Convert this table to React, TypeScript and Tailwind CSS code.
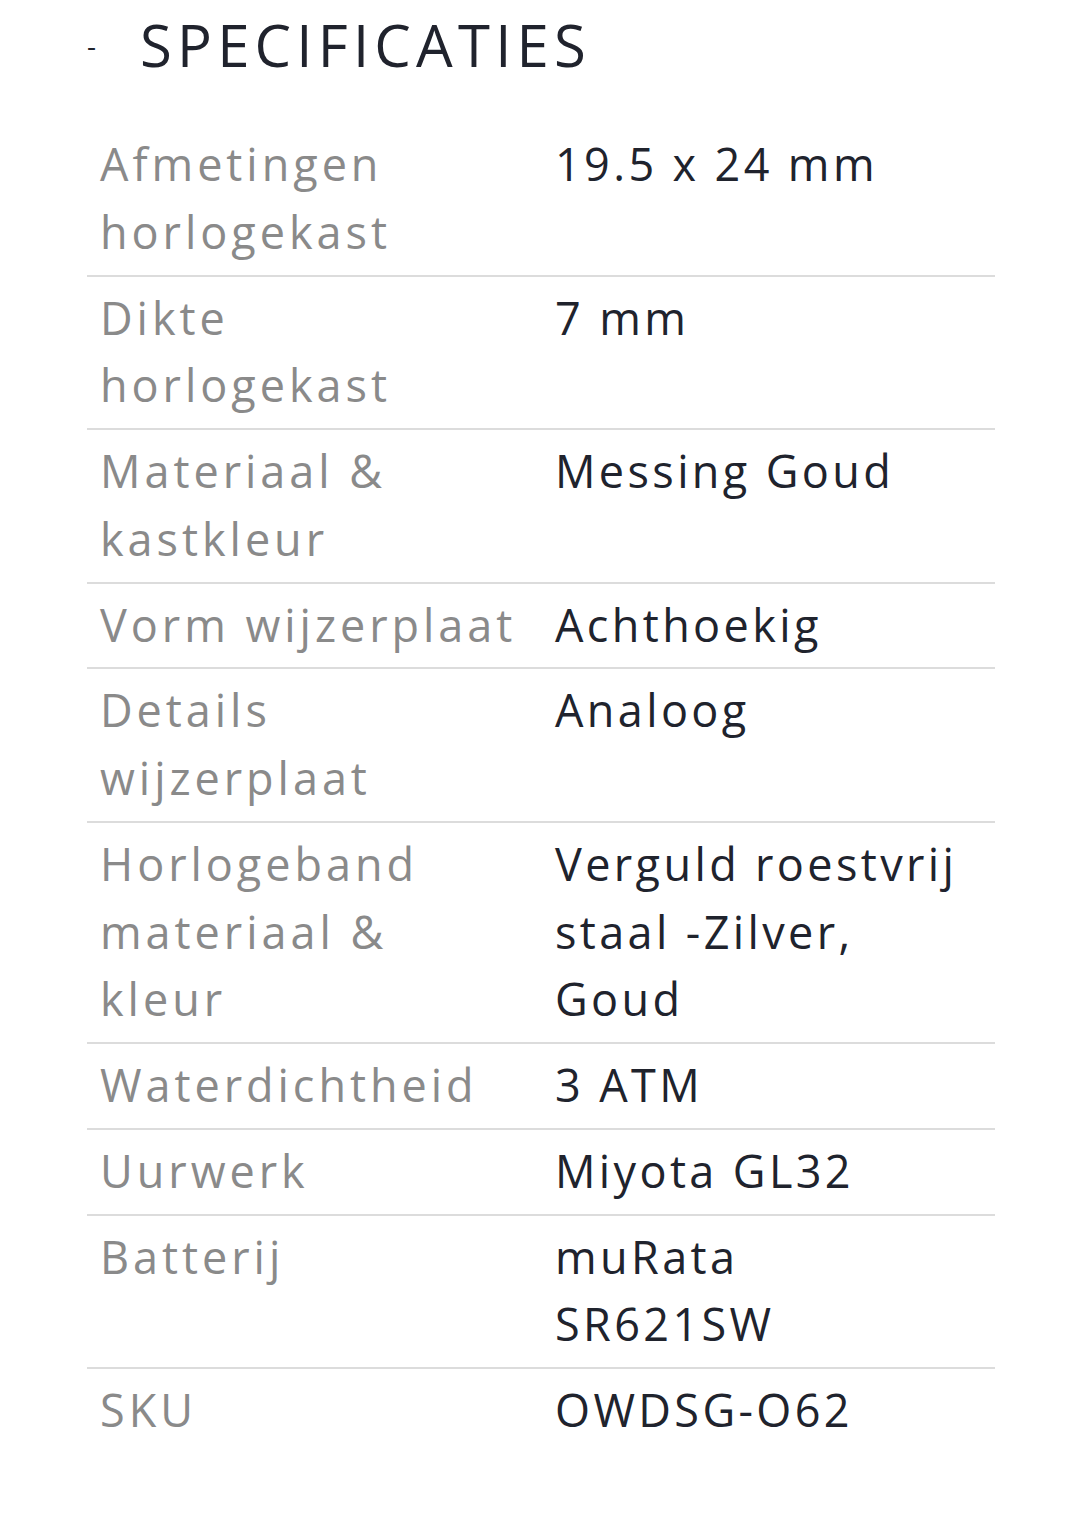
import React from 'react';

const specs: [string[], string[]][] = [
  [['Afmetingen', 'horlogekast'], ['19.5 x 24 mm']],
  [['Dikte', 'horlogekast'], ['7 mm']],
  [['Materiaal &', 'kastkleur'], ['Messing Goud']],
  [['Vorm wijzerplaat'], ['Achthoekig']],
  [['Details', 'wijzerplaat'], ['Analoog']],
  [['Horlogeband', 'materiaal &', 'kleur'], ['Verguld roestvrij', 'staal -Zilver,', 'Goud']],
  [['Waterdichtheid'], ['3 ATM']],
  [['Uurwerk'], ['Miyota GL32']],
  [['Batterij'], ['muRata', 'SR621SW']],
  [['SKU'], ['OWDSG-O62']],
];

const Lines = ({ lines }: { lines: string[] }) => (
  <>
    {lines.map((l) => (
      <span key={l} className="block whitespace-nowrap">
        {l}
      </span>
    ))}
  </>
);

const App = () => {
  return (
    <div className="min-h-[1536px] w-[1080px] bg-white font-['Open_Sans',sans-serif]">
      <div className="flex items-center pt-[10px] pl-[87px]">
        <span className="text-[28px] leading-none text-[#20232d]">-</span>
        <h2 className="ml-[44px] text-[58px] leading-[70px] tracking-[0.09em] text-[#20232d]">
          SPECIFICATIES
        </h2>
      </div>

      <table className="mt-[43px] ml-[87px] w-[908px] border-collapse">
        <tbody>
          {specs.map(([label, value], i) => (
            <tr
              key={label[0]}
              className={i < specs.length - 1 ? 'border-b-2 border-[#dcdcdc]' : ''}
            >
              <td className="w-[468px] pl-[13px] pr-[10px] pt-[7px] pb-[9px] align-top text-[45px] leading-[67.75px] tracking-[0.088em] text-[#8a8a8a]">
                <Lines lines={label} />
              </td>
              <td className="pr-[10px] pt-[7px] pb-[9px] align-top text-[45px] leading-[67.75px] tracking-[0.075em] text-[#20232d]">
                <Lines lines={value} />
              </td>
            </tr>
          ))}
        </tbody>
      </table>
    </div>
  );
};

export default App;
